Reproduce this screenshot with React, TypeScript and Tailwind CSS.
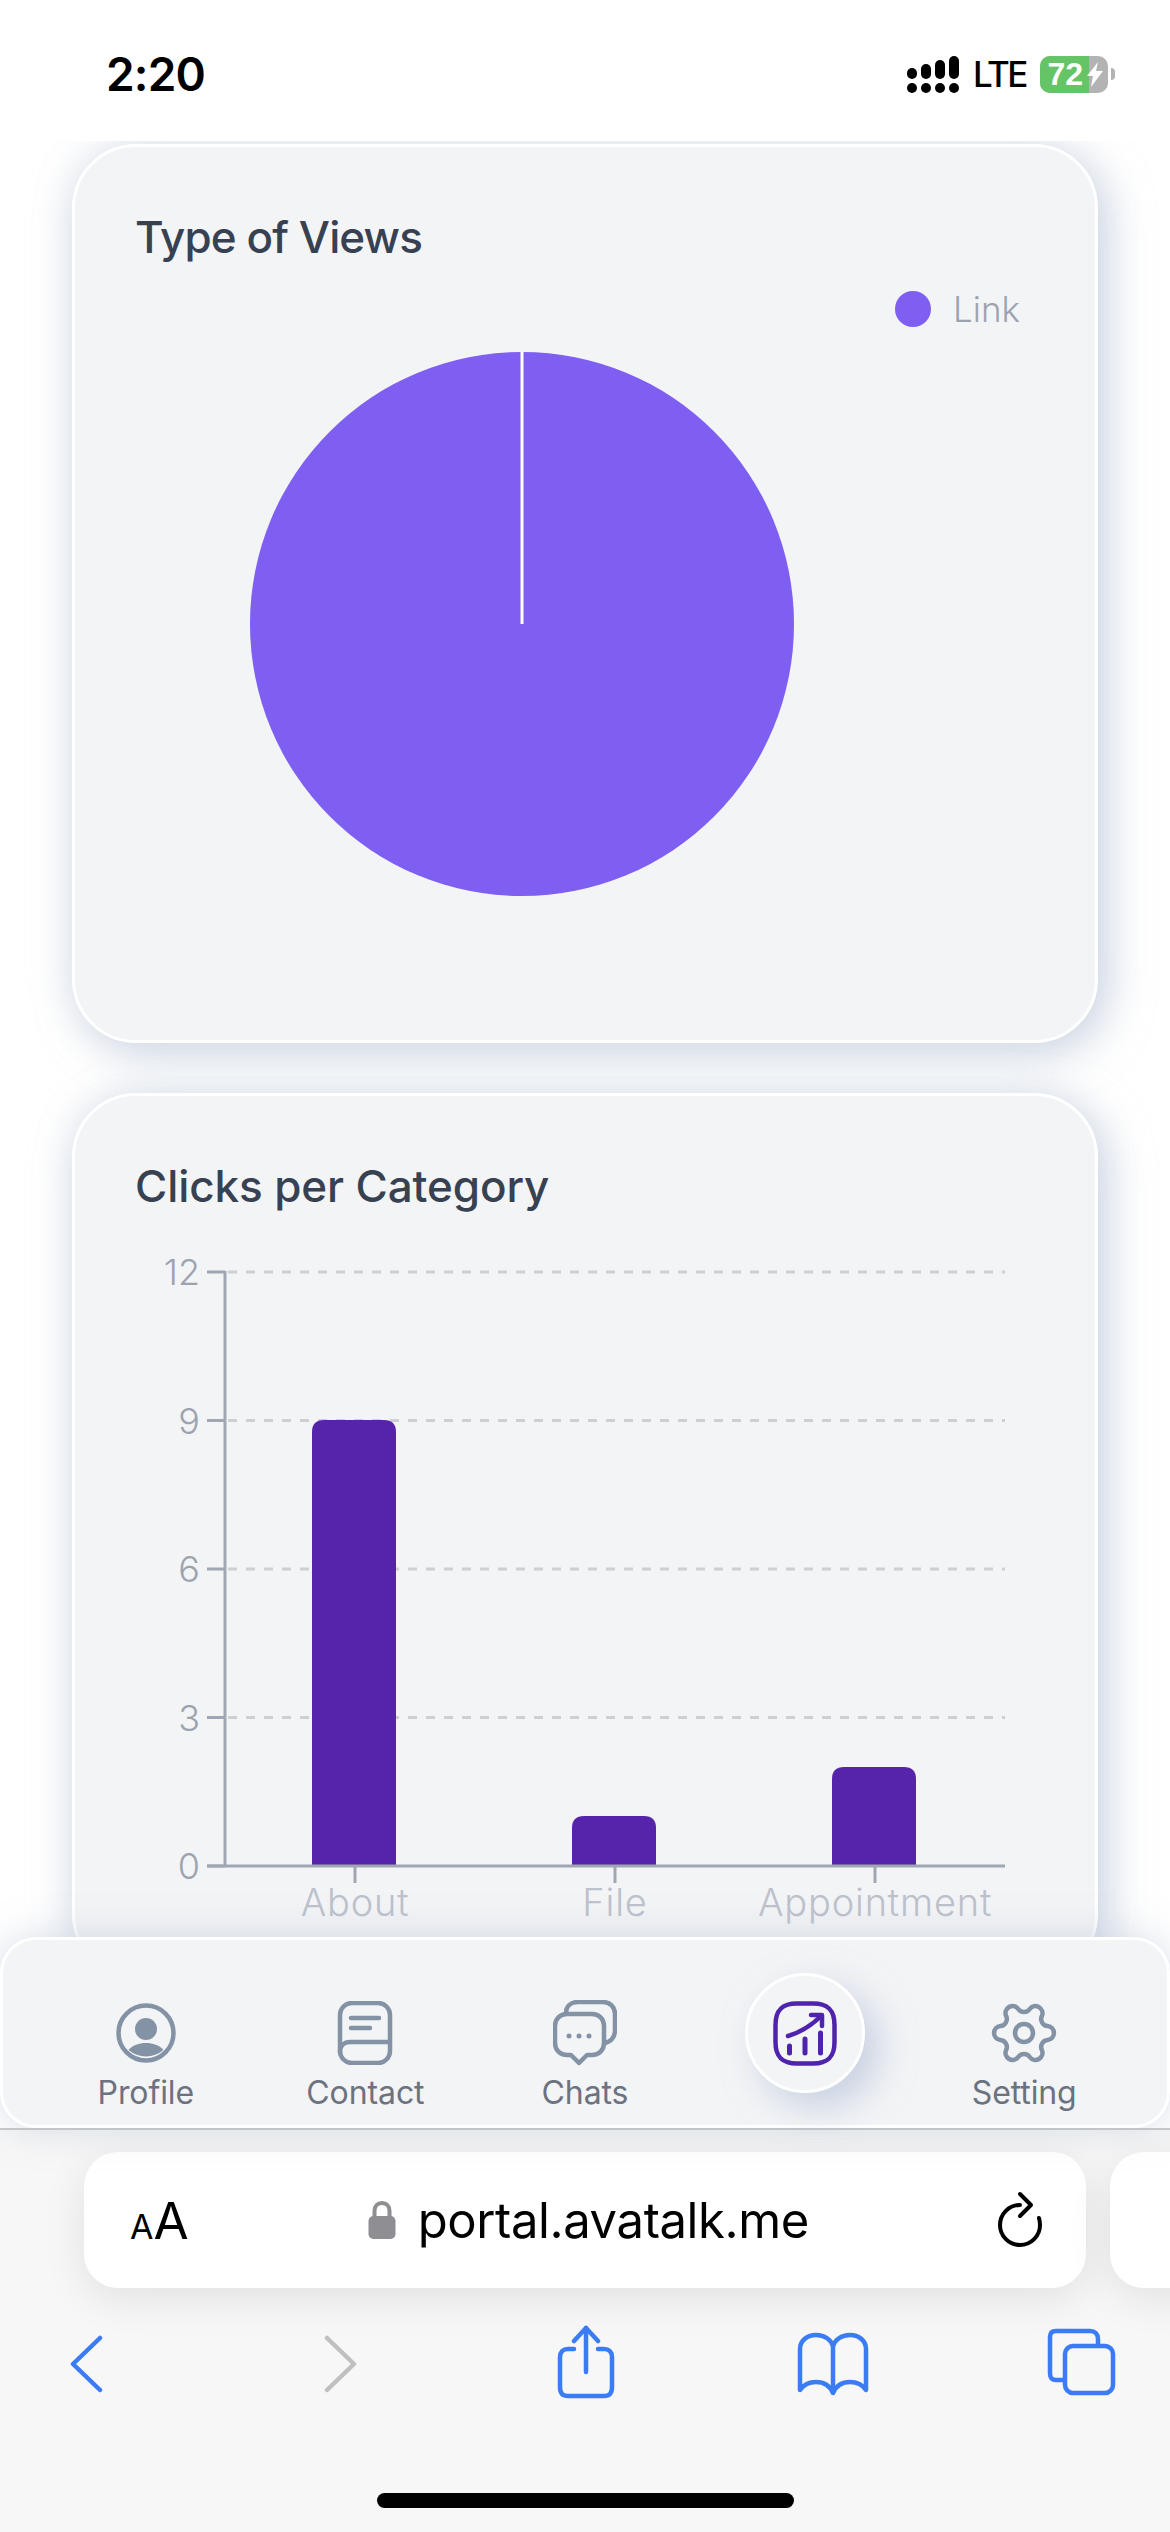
import React from "react";

const Signal = () => (
  <svg width="52" height="37" viewBox="0 0 52 37" fill="#000">
    <rect x="0" y="12" width="10" height="11" rx="5" />
    <rect x="14" y="8" width="10" height="15" rx="5" />
    <rect x="28" y="4" width="10" height="19" rx="5" />
    <rect x="42" y="0" width="10" height="23" rx="5" />
    <rect x="0" y="27" width="10" height="10" rx="5" />
    <rect x="14" y="27" width="10" height="10" rx="5" />
    <rect x="28" y="27" width="10" height="10" rx="5" />
    <rect x="42" y="27" width="10" height="10" rx="5" />
  </svg>
);

const StatusBar = () => (
  <div className="flex h-[141px] shrink-0 items-center justify-between bg-white pl-[106px] pr-[55px] pt-[7px]">
    <span className="text-[46px] font-semibold leading-none tracking-[-0.8px] text-black">2:20</span>
    <div className="flex items-center">
      <Signal />
      <span className="ml-[14px] w-[54px] text-[35px] font-medium leading-none tracking-[-2.6px] text-black">LTE</span>
      <div className="relative ml-[13px] flex h-[37px] w-[68px] overflow-hidden rounded-[10px] bg-[#b3b3b3]">
        <div className="flex w-[49px] items-center justify-end bg-[#65c466] pr-[6px] font-['Liberation_Sans',sans-serif] text-[32px] font-bold leading-none text-white">
          72
        </div>
        <svg className="absolute left-[47px] top-[6px]" width="16" height="25" viewBox="0 0 16 25" fill="#fff">
          <path d="M11 0 L0 14 H6 L4 25 L16 9 H9 Z" />
        </svg>
      </div>
      <div className="ml-[3px] h-[12px] w-[4px] rounded-r-full bg-[#b3b3b3]" />
    </div>
  </div>
);

const CARD =
  "rounded-[64px] border-[3px] border-white bg-[#f3f4f6] shadow-[10px_10px_44px_rgba(176,190,212,0.6),-4px_-2px_40px_rgba(190,200,218,0.28)]";

const PieCard = () => (
  <section className={`${CARD} mt-[3px] pt-[60px] pb-[140px]`}>
    <h2 className="h-[60px] pl-[60px] text-[44px] font-medium leading-[60px] tracking-[-0.9px] text-[#374151]">Type of Views</h2>
    <div className="mt-[22px] flex h-[40px] items-center justify-end pr-[75px]">
      <span className="h-[36px] w-[36px] rounded-full bg-[#7f5ef2]" />
      <span className="ml-[22px] text-[35px] font-light leading-[40px] text-[#9ca3af]">Link</span>
    </div>
    <svg className="ml-[173px] mt-[19px] block" width="548" height="552" viewBox="248 348 548 552">
      <circle cx="522" cy="624" r="272" fill="#7f5ef2" />
      <line x1="522" y1="352" x2="522" y2="624" stroke="#fff" strokeWidth="3" />
    </svg>
  </section>
);

const grid = [1272, 1420.5, 1569, 1717.5];
const yLabels: [string, number][] = [
  ["12", 1272],
  ["9", 1420.5],
  ["6", 1569],
  ["3", 1717.5],
  ["0", 1866],
];
const bars = [
  { x: 312, top: 1420 },
  { x: 572, top: 1816 },
  { x: 832, top: 1767 },
];
const xLabels: [string, number][] = [
  ["About", 355],
  ["File", 615],
  ["Appointment", 875],
];

const BarCard = () => (
  <section className={`${CARD} mt-[50px] h-[885px] pt-[60px]`}>
    <h2 className="h-[60px] pl-[60px] text-[44px] font-medium leading-[60px] tracking-[-0.1px] text-[#374151]">Clicks per Category</h2>
    <svg className="mt-[14px] block" width="1020" height="720" viewBox="75 1230 1020 720">
      {grid.map((y) => (
        <line key={y} x1="228" x2="1005" y1={y} y2={y} stroke="#cdcfd3" strokeWidth="3" strokeDasharray="9 9" />
      ))}
      {bars.map((b) => (
        <path
          key={b.x}
          d={`M${b.x} 1866 V${b.top + 12} Q${b.x} ${b.top} ${b.x + 12} ${b.top} H${b.x + 72} Q${b.x + 84} ${b.top} ${b.x + 84} ${b.top + 12} V1866 Z`}
          fill="#5524ab"
        />
      ))}
      <line x1="225" x2="225" y1="1271" y2="1867" stroke="#a0a6b2" strokeWidth="3" />
      <line x1="207" x2="1005" y1="1866" y2="1866" stroke="#a0a6b2" strokeWidth="3" />
      {yLabels.map(([t, y]) => (
        <g key={t}>
          <line x1="207" x2="225" y1={y} y2={y} stroke="#a0a6b2" strokeWidth="3" />
          <text x="200" y={y + 13} textAnchor="end" fontSize="36" fontWeight="300" fill="#9ca3af">
            {t}
          </text>
        </g>
      ))}
      {xLabels.map(([t, x]) => (
        <g key={t}>
          <line x1={x} x2={x} y1="1866" y2="1883" stroke="#a0a6b2" strokeWidth="3" />
          <text x={x} y="1916" textAnchor="middle" fontSize="38" fontWeight="300" letterSpacing="0.8" fill="#bcc1cb">
            {t}
          </text>
        </g>
      ))}
    </svg>
  </section>
);

const GRAY = "#8492a6";

const ProfileIcon = () => (
  <svg width="64" height="64" viewBox="0 0 64 64" fill="none">
    <circle cx="32" cy="32" r="27.5" stroke={GRAY} strokeWidth="4.5" />
    <circle cx="32" cy="28" r="11" fill={GRAY} />
    <path d="M14.5 49 C19 44 25 42 32 42 C39 42 45 44 49.5 49 A27 27 0 0 1 14.5 49 Z" fill={GRAY} />
  </svg>
);

const ContactIcon = () => (
  <svg width="64" height="64" viewBox="0 0 64 64" fill="none" stroke={GRAY} strokeWidth="4.5" strokeLinecap="round">
    <rect x="7" y="2" width="50" height="60" rx="12" />
    <path d="M7 51 C7 45 11 41 17 41 H57" />
    <path d="M18 17 H46" />
    <path d="M18 27 H37" />
  </svg>
);

const ChatsIcon = () => (
  <svg width="64" height="66" viewBox="0 0 64 66" fill="none" stroke={GRAY} strokeWidth="4.5" strokeLinejoin="round">
    <path d="M14 14 H39 C46 14 51 19 51 26 V43 C51 50 46 55 39 55 H34 L26 63 L18 55 H14 C7 55 2 50 2 43 V26 C2 19 7 14 14 14 Z" />
    <path d="M13 13 C13 6 18 2 25 2 H50 C57 2 62 7 62 14 V30 C62 37 58 42 51 43" />
    <circle cx="16" cy="36" r="2.5" fill={GRAY} stroke="none" />
    <circle cx="26" cy="36" r="2.5" fill={GRAY} stroke="none" />
    <circle cx="36" cy="36" r="2.5" fill={GRAY} stroke="none" />
  </svg>
);

const StatsIcon = () => (
  <svg width="64" height="65" viewBox="0 0 64 65" fill="none" stroke="#4f23ac" strokeWidth="4.5" strokeLinecap="round" strokeLinejoin="round">
    <path d="M24 2.5 H40 C55 2.5 61.5 9 61.5 24 V41 C61.5 56 55 62.5 40 62.5 H24 C9 62.5 2.5 56 2.5 41 V24 C2.5 9 9 2.5 24 2.5 Z" />
    <path d="M15 35 C28 31 39 24 48 15" />
    <path d="M38 14 H49 V25" />
    <path d="M16.5 45 V52" strokeWidth="5" />
    <path d="M32 38 V52" strokeWidth="5" />
    <path d="M47.5 32 V52" strokeWidth="5" />
  </svg>
);

const GearIcon = () => (
  <svg width="60" height="60" viewBox="2 2 20 20" fill="none" stroke={GRAY} strokeWidth="1.5" strokeLinecap="round" strokeLinejoin="round" className="overflow-visible">
    <g transform="rotate(90 12 12)">
      <path d="M9.671 4.136a2.34 2.34 0 0 1 4.659 0 2.34 2.34 0 0 0 3.319 1.915 2.34 2.34 0 0 1 2.33 4.033 2.34 2.34 0 0 0 0 3.831 2.34 2.34 0 0 1-2.33 4.033 2.34 2.34 0 0 0-3.319 1.915 2.34 2.34 0 0 1-4.659 0 2.34 2.34 0 0 0-3.32-1.915 2.34 2.34 0 0 1-2.33-4.033 2.34 2.34 0 0 0 0-3.831A2.34 2.34 0 0 1 6.35 6.051a2.34 2.34 0 0 0 3.319-1.915" />
      <circle cx="12" cy="12" r="3" />
    </g>
  </svg>
);

const NavItem = ({ icon, label }: { icon: React.ReactNode; label: string }) => (
  <div className="flex flex-col items-center">
    <div className="flex h-[64px] items-center justify-center">{icon}</div>
    <span className="mt-[10px] text-[32px] leading-[36px] tracking-[-0.1px] text-[#6b7280]">{label}</span>
  </div>
);

const BottomNav = () => (
  <nav className="relative z-10 grid h-[191px] shrink-0 grid-cols-5 rounded-[36px] border-[3px] border-white bg-[#f3f4f6] px-[33px] pt-[61px] shadow-[0_0_36px_rgba(176,188,208,0.5)]">
    <NavItem icon={<ProfileIcon />} label="Profile" />
    <NavItem icon={<ContactIcon />} label="Contact" />
    <NavItem icon={<ChatsIcon />} label="Chats" />
    <div className="flex h-[64px] items-center justify-center">
      <div className="flex h-[120px] w-[120px] shrink-0 items-center justify-center rounded-full border-[3px] border-white bg-[#f3f4f6] shadow-[14px_14px_36px_rgba(170,185,212,0.6)]">
        <StatsIcon />
      </div>
    </div>
    <NavItem icon={<GearIcon />} label="Setting" />
  </nav>
);

const BLUE = "#3b7cf5";

const UrlBar = () => (
  <div className="flex h-[136px] items-center overflow-visible">
    <div className="ml-[84px] flex h-[136px] w-[1002px] shrink-0 items-center rounded-[34px] bg-white pl-[46px] pr-[42px] shadow-[0_10px_44px_rgba(0,0,0,0.09)]">
      <div className="flex items-baseline leading-none text-black">
        <span className="text-[34px]">A</span>
        <span className="text-[51px]">A</span>
      </div>
      <svg className="ml-[179px]" width="28" height="38" viewBox="0 0 28 38" fill="none">
        <path d="M6.5 16 V10 C6.5 5 9.5 2 14 2 C18.5 2 21.5 5 21.5 10 V16" stroke="#8e8e93" strokeWidth="4" />
        <rect x="0.5" y="15" width="27" height="23" rx="5" fill="#8e8e93" />
      </svg>
      <span className="ml-[22px] text-[49px] leading-none tracking-[-0.4px] text-black">portal.avatalk.me</span>
      <svg className="ml-auto" width="48" height="58" viewBox="0 0 48 58" fill="none" stroke="#000" strokeWidth="4" strokeLinecap="round" strokeLinejoin="round">
        <path d="M24 14 A20 20 0 1 0 44 34 C44 31 43.5 29 43 27" />
        <path d="M24 3 L35 14 L24 25" />
      </svg>
    </div>
    <div className="ml-[24px] h-[136px] w-[200px] shrink-0 rounded-[34px] bg-white shadow-[0_10px_44px_rgba(0,0,0,0.09)]" />
  </div>
);

const Toolbar = () => (
  <div className="mt-[39px] flex items-start pl-[69px]">
    <svg className="mt-[8px]" width="34" height="58" viewBox="0 0 34 58" fill="none" stroke={BLUE} strokeWidth="4.5" strokeLinecap="round" strokeLinejoin="round">
      <path d="M31 3 L4 29 L31 55" />
    </svg>
    <svg className="ml-[221px] mt-[8px]" width="34" height="58" viewBox="0 0 34 58" fill="none" stroke="#c0c0c0" strokeWidth="4.5" strokeLinecap="round" strokeLinejoin="round">
      <path d="M3 3 L30 29 L3 55" />
    </svg>
    <svg className="ml-[198px] -mt-[2px]" width="60" height="75" viewBox="0 0 60 75" fill="none" stroke={BLUE} strokeWidth="4.5" strokeLinecap="round" strokeLinejoin="round">
      <path d="M18 24 H12 C7 24 4 27 4 32 V62 C4 69 7 71 12 71 H48 C53 71 56 69 56 62 V32 C56 27 53 24 48 24 H42" />
      <path d="M30 3 V47" />
      <path d="M18 16 L30 3 L42 16" />
    </svg>
    <svg className="ml-[180px] mt-[5px]" width="74" height="64" viewBox="0 0 74 64" fill="none" stroke={BLUE} strokeWidth="4.5" strokeLinejoin="round">
      <path d="M37 14 C35 8 29 3 20 3 C12 3 4 8 4 17 V58 C8 52 14 50 20 50 C28 50 34 54 37 61 C40 54 46 50 54 50 C60 50 66 52 70 58 V17 C70 8 62 3 54 3 C45 3 39 8 37 14 Z" />
      <path d="M37 14 V61" />
    </svg>
    <svg className="ml-[176px]" width="70" height="70" viewBox="0 0 70 70" fill="none" stroke={BLUE} strokeWidth="4.5" strokeLinejoin="round">
      <path d="M17 53 H10 C5 53 4 50 4 46 V10 C4 5 7 4 10 4 H44 C49 4 52 7 52 12 V17" />
      <rect x="19" y="19" width="48" height="47" rx="8" />
    </svg>
  </div>
);

export default function App() {
  return (
    <div className="flex h-[2532px] w-[1170px] flex-col overflow-hidden bg-white font-['Inter',sans-serif]">
      <StatusBar />
      <main className="h-[1796px] shrink-0 overflow-hidden px-[72px]">
        <PieCard />
        <BarCard />
      </main>
      <BottomNav />
      <footer className="flex flex-1 flex-col overflow-hidden border-t-[2px] border-[#c8c8c8] bg-[#f7f7f7] pt-[22px]">
        <UrlBar />
        <Toolbar />
        <div className="mt-auto mb-[24px] h-[15px] w-[417px] self-center rounded-full bg-black" />
      </footer>
    </div>
  );
}
